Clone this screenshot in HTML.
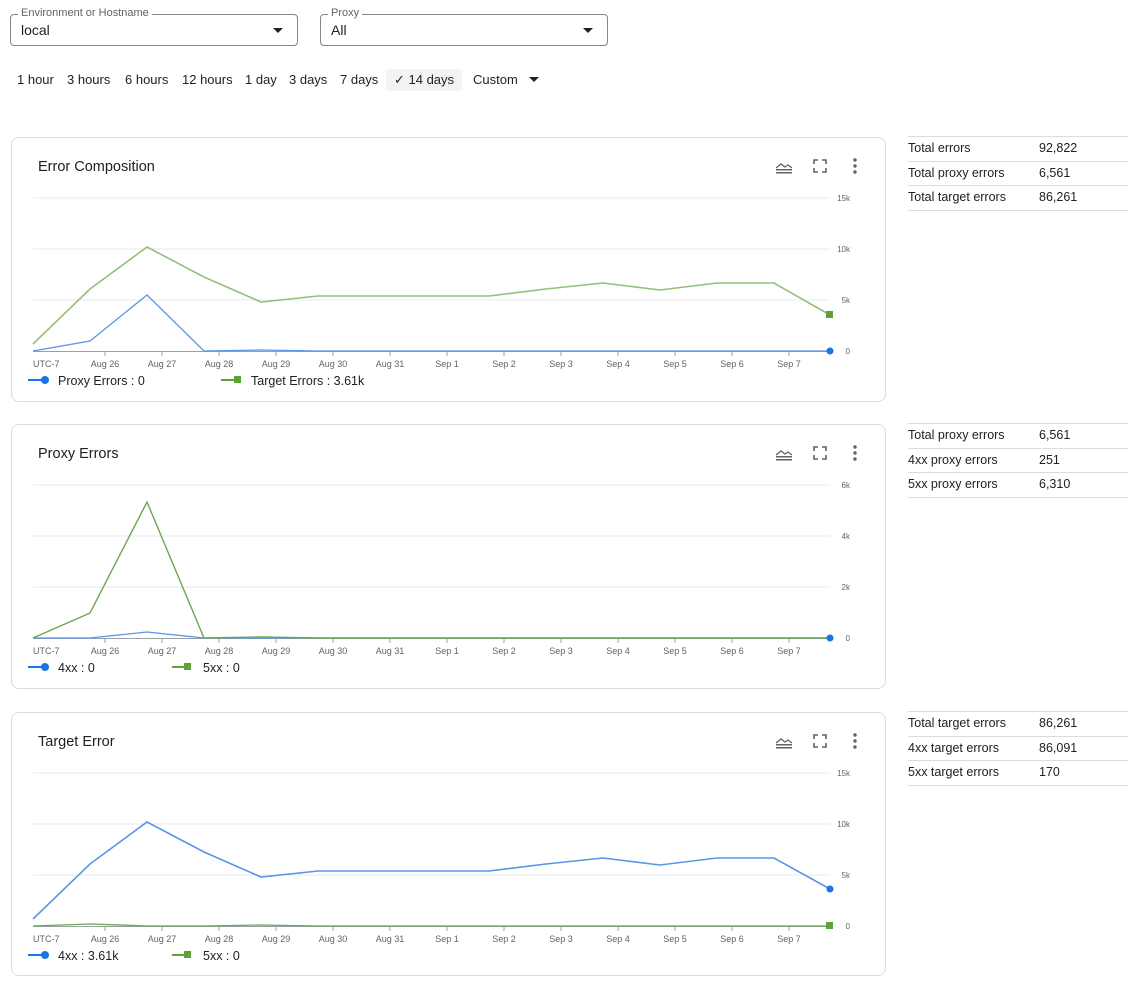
<!DOCTYPE html>
<html><head><style>
body{margin:0;width:1128px;height:986px;background:#fff;font-family:"Liberation Sans",sans-serif;color:#202124;position:relative;overflow:hidden}
.sel{position:absolute;top:14px;height:30px;width:286px;border:1px solid #80868b;border-radius:4px}
.sel .lab{position:absolute;top:-8px;left:7px;background:#fff;padding:0 3px;font-size:11px;color:#5f6368}
.sel .val{position:absolute;left:10px;top:7px;font-size:14px}
.sel .arr{position:absolute;right:14px;top:13px;width:0;height:0;border-left:5px solid transparent;border-right:5px solid transparent;border-top:5px solid #202124}
.t{position:absolute;top:72px;font-size:13px}
.card{position:absolute;left:11px;width:873px;border:1px solid #dadce0;border-radius:8px}
.title{position:absolute;left:26px;top:21px;font-size:14.5px}
.st{position:absolute;left:908px;width:220px;font-size:12.5px}
.st div{height:23.5px;border-top:1px solid #dadce0;position:relative}
.st div:last-child{border-bottom:1px solid #dadce0}
.st span{position:absolute;top:4px}
.st span+span{left:131px}
</style></head><body>
<div class="sel" style="left:10px"><span class="lab">Environment or Hostname</span><span class="val">local</span><span class="arr"></span></div>
<div class="sel" style="left:320px"><span class="lab">Proxy</span><span class="val">All</span><span class="arr"></span></div>
<div class="t" style="left:17px">1 hour</div>
<div class="t" style="left:67px">3 hours</div>
<div class="t" style="left:125px">6 hours</div>
<div class="t" style="left:182px">12 hours</div>
<div class="t" style="left:245px">1 day</div>
<div class="t" style="left:289px">3 days</div>
<div class="t" style="left:340px">7 days</div>
<div style="position:absolute;left:386px;top:69px;width:76px;height:22px;background:#f1f3f4;border-radius:4px"></div>
<div class="t" style="left:394px">✓ 14 days</div>
<div class="t" style="left:473px">Custom</div>
<div style="position:absolute;left:529px;top:77px;border-left:5px solid transparent;border-right:5px solid transparent;border-top:5px solid #202124"></div>

<div class="card" style="top:137px;height:263px"><div class="title">Error Composition</div></div>
<div class="card" style="top:424px;height:263px"><div class="title">Proxy Errors</div></div>
<div class="card" style="top:712px;height:262px"><div class="title">Target Error</div></div>

<div class="st" style="top:136px"><div><span>Total errors</span><span>92,822</span></div><div><span>Total proxy errors</span><span>6,561</span></div><div><span>Total target errors</span><span>86,261</span></div></div>
<div class="st" style="top:423px"><div><span>Total proxy errors</span><span>6,561</span></div><div><span>4xx proxy errors</span><span>251</span></div><div><span>5xx proxy errors</span><span>6,310</span></div></div>
<div class="st" style="top:711px"><div><span>Total target errors</span><span>86,261</span></div><div><span>4xx target errors</span><span>86,091</span></div><div><span>5xx target errors</span><span>170</span></div></div>

<svg width="1128" height="986" style="position:absolute;left:0;top:0" font-family="Liberation Sans, sans-serif">
<defs>
<g id="axes" font-size="9" fill="#5f6368">
<line x1="33" y1="198" x2="830" y2="198" stroke="#e8eaed"/>
<line x1="33" y1="249" x2="830" y2="249" stroke="#e8eaed"/>
<line x1="33" y1="300" x2="830" y2="300" stroke="#e8eaed"/>
<line x1="33" y1="351.5" x2="830" y2="351.5" stroke="#9aa0a6"/>
<path d="M105 352v4M162 352v4M219 352v4M276 352v4M333 352v4M390 352v4M447 352v4M504 352v4M561 352v4M618 352v4M675 352v4M732 352v4M789 352v4" stroke="#9aa0a6"/>
<text x="33" y="367">UTC-7</text>
<g text-anchor="middle"><text x="105" y="367">Aug 26</text><text x="162" y="367">Aug 27</text><text x="219" y="367">Aug 28</text><text x="276" y="367">Aug 29</text><text x="333" y="367">Aug 30</text><text x="390" y="367">Aug 31</text><text x="447" y="367">Sep 1</text><text x="504" y="367">Sep 2</text><text x="561" y="367">Sep 3</text><text x="618" y="367">Sep 4</text><text x="675" y="367">Sep 5</text><text x="732" y="367">Sep 6</text><text x="789" y="367">Sep 7</text></g>
<line x1="28" y1="380" x2="44" y2="380" stroke="#1a73e8" stroke-width="2"/><circle cx="45" cy="380" r="4" fill="#1a73e8"/>
<g fill="#5f6368" transform="translate(776,160)"><path d="M0 8l5-4 4 3 3-2 4 3" stroke="#5f6368" fill="none" stroke-width="1.3"/><rect y="9" width="16" height="1.5"/><rect y="12" width="16" height="1.5"/></g>
<path d="M814 164v-4h4M822 160h4v4M826 168v4h-4M818 172h-4v-4" stroke="#5f6368" stroke-width="1.6" fill="none"/>
<circle cx="855" cy="160" r="1.7" fill="#5f6368"/><circle cx="855" cy="166" r="1.7" fill="#5f6368"/><circle cx="855" cy="172" r="1.7" fill="#5f6368"/>
</g>
</defs>
<g font-size="12.5" fill="#202124">
<use href="#axes"/>
<g font-size="8" fill="#5f6368" text-anchor="end"><text x="850" y="201">15k</text><text x="850" y="252">10k</text><text x="850" y="303">5k</text><text x="850" y="354">0</text></g>
<polyline fill="none" stroke="#93c07a" stroke-width="1.6" points="33,344 90,289 147,247 204,277 261,302 318,296 375,296 432,296 489,296 546,289 603,283 660,290 717,283 774,283 830,315"/>
<polyline fill="none" stroke="#5a95e8" stroke-width="1.3" points="33,351 90,341 147,295 204,351 261,350 318,351 830,351"/>
<rect x="826" y="311" width="7" height="7" fill="#5ea33a"/><circle cx="830" cy="351" r="3.5" fill="#1a73e8"/>
<line x1="221" y1="380" x2="236" y2="380" stroke="#5ea33a" stroke-width="2"/><rect x="234" y="376" width="7" height="7" fill="#5ea33a"/>
<text x="58" y="385">Proxy Errors :  0</text><text x="251" y="385">Target Errors :  3.61k</text>

<g transform="translate(0,287)"><use href="#axes"/>
<g font-size="8" fill="#5f6368" text-anchor="end"><text x="850" y="201">6k</text><text x="850" y="252">4k</text><text x="850" y="303">2k</text><text x="850" y="354">0</text></g>
<polyline fill="none" stroke="#5a95e8" stroke-width="1.3" points="33,351 90,351 147,345 204,351 830,351"/>
<polyline fill="none" stroke="#6aa84f" stroke-width="1.4" points="33,351 90,326 147,215 204,351 261,350 318,351 830,351"/>
<circle cx="830" cy="351" r="3.5" fill="#1a73e8"/>
<line x1="172" y1="380" x2="187" y2="380" stroke="#5ea33a" stroke-width="2"/><rect x="184" y="376" width="7" height="7" fill="#5ea33a"/>
<text x="58" y="385">4xx :  0</text><text x="203" y="385">5xx :  0</text></g>

<g transform="translate(0,575)"><use href="#axes"/>
<g font-size="8" fill="#5f6368" text-anchor="end"><text x="850" y="201">15k</text><text x="850" y="252">10k</text><text x="850" y="303">5k</text><text x="850" y="354">0</text></g>
<polyline fill="none" stroke="#5a95e8" stroke-width="1.6" points="33,344 90,289 147,247 204,277 261,302 318,296 375,296 432,296 489,296 546,289 603,283 660,290 717,283 774,283 830,314"/>
<polyline fill="none" stroke="#6aa84f" stroke-width="1.3" points="33,351 90,349 147,351 204,351 261,350 318,351 830,351"/>
<rect x="826" y="347" width="7" height="7" fill="#5ea33a"/><circle cx="830" cy="314" r="3.5" fill="#1a73e8"/>
<line x1="172" y1="380" x2="187" y2="380" stroke="#5ea33a" stroke-width="2"/><rect x="184" y="376" width="7" height="7" fill="#5ea33a"/>
<text x="58" y="385">4xx :  3.61k</text><text x="203" y="385">5xx :  0</text></g>
</g>
</svg>
</body></html>
